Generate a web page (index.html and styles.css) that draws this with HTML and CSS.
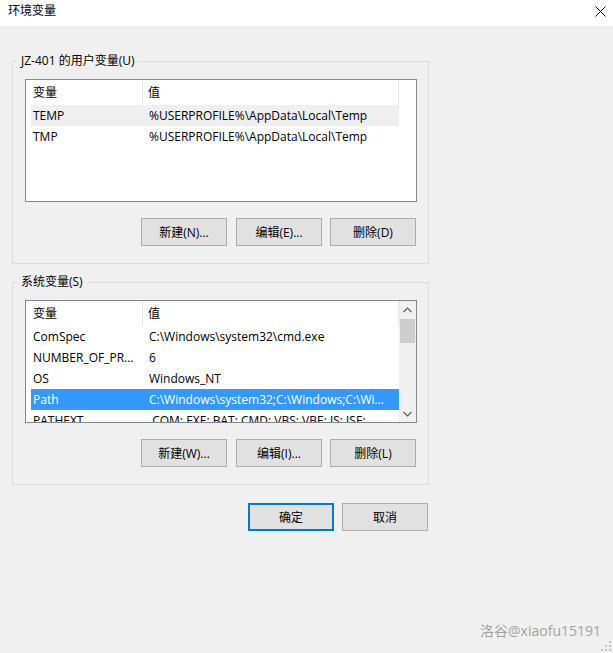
FILE: index.html
```html
<!DOCTYPE html>
<html lang="zh-CN">
<head>
<meta charset="utf-8">
<title>环境变量</title>
<link rel="stylesheet" href="styles.css">
</head>
<body>
<div class="window">
  <div class="titlebar">
    <span class="title">环境变量</span>
    <svg class="close" width="11" height="11" viewBox="0 0 11 11"><path d="M0.5 0.5 L10.5 10.5 M10.5 0.5 L0.5 10.5" stroke="#000" stroke-width="1" fill="none"/></svg>
  </div>
  <div class="content">
    <fieldset class="group">
      <legend>JZ-401 的用户变量(U)</legend>
      <div class="list">
        <div class="rows">
          <div class="row head"><span class="c1">变量</span><span class="c2">值</span></div>
          <div class="row inactive"><span class="c1">TEMP</span><span class="c2">%USERPROFILE%\AppData\Local\Temp</span></div>
          <div class="row"><span class="c1">TMP</span><span class="c2">%USERPROFILE%\AppData\Local\Temp</span></div>
        </div>
      </div>
      <div class="btns">
        <button class="btn">新建(N)...</button>
        <button class="btn">编辑(E)...</button>
        <button class="btn last">删除(D)</button>
      </div>
    </fieldset>

    <fieldset class="group group-sys">
      <legend>系统变量(S)</legend>
      <div class="list">
        <div class="rows">
          <div class="row head"><span class="c1">变量</span><span class="c2">值</span></div>
          <div class="row"><span class="c1">ComSpec</span><span class="c2">C:\Windows\system32\cmd.exe</span></div>
          <div class="row"><span class="c1">NUMBER_OF_PR...</span><span class="c2">6</span></div>
          <div class="row"><span class="c1">OS</span><span class="c2">Windows_NT</span></div>
          <div class="row selected"><span class="c1">Path</span><span class="c2">C:\Windows\system32;C:\Windows;C:\Wi...</span></div>
          <div class="row"><span class="c1">PATHEXT</span><span class="c2">.COM;.EXE;.BAT;.CMD;.VBS;.VBE;.JS;.JSE;</span></div>
        </div>
        <div class="scrollbar">
          <div class="arrow"><svg width="9" height="6" viewBox="0 0 9 6"><path d="M0.5 5 L4.5 1 L8.5 5" stroke="#606060" stroke-width="1.2" fill="none"/></svg></div>
          <div class="track"><div class="thumb"></div></div>
          <div class="arrow"><svg width="9" height="6" viewBox="0 0 9 6"><path d="M0.5 1 L4.5 5 L8.5 1" stroke="#606060" stroke-width="1.2" fill="none"/></svg></div>
        </div>
      </div>
      <div class="btns">
        <button class="btn">新建(W)...</button>
        <button class="btn">编辑(I)...</button>
        <button class="btn last">删除(L)</button>
      </div>
    </fieldset>

    <div class="btns dialog-btns">
      <button class="btn default">确定</button>
      <button class="btn">取消</button>
    </div>
  </div>
  <div class="watermark">洛谷@xiaofu15191</div>
  <svg class="grip" width="11" height="11" viewBox="0 0 11 11">
    <rect x="9" y="1" width="2" height="2" fill="#c4c4c4"/>
    <rect x="5" y="5" width="2" height="2" fill="#c4c4c4"/>
    <rect x="9" y="5" width="2" height="2" fill="#c4c4c4"/>
    <rect x="1" y="9" width="2" height="2" fill="#c4c4c4"/>
    <rect x="5" y="9" width="2" height="2" fill="#c4c4c4"/>
    <rect x="9" y="9" width="2" height="2" fill="#c4c4c4"/>
  </svg>
</div>
</body>
</html>
```

FILE: styles.css
```css
* { box-sizing: border-box; }

html, body {
  margin: 0;
  padding: 0;
  background: #f0f0f0;
}

body {
  font-family: "Open Sans", "Noto Sans CJK SC", sans-serif;
  font-size: 12px;
  color: #000;
}

.window {
  position: relative;
  width: 613px;
  height: 653px;
  background: #f0f0f0;
  overflow: hidden;
}

.titlebar {
  height: 26px;
  background: #fff;
  display: flex;
  justify-content: space-between;
  align-items: flex-start;
  padding: 0 7px 0 8px;
}

.title {
  line-height: 16px;
  padding-top: 3px;
}

.close {
  margin-top: 6px;
}

.content {
  padding: 27px 0 0 12px;
  width: 429px;
}

.group {
  margin: 0;
  padding: 10px 11px 17px 4px;
  border: 1px solid #dcdcdc;
  min-inline-size: 0;
}

.group-sys {
  margin-top: 10px;
}

.group legend {
  padding: 0 4px;
  line-height: 16px;
}

.list {
  margin-left: 8px;
  height: 123px;
  border: 1px solid #828790;
  background: #fff;
  display: flex;
  padding-left: 5px;
  overflow: hidden;
}

.rows {
  width: 368px;
  display: flex;
  flex-direction: column;
}

.row {
  display: flex;
  height: 21px;
  flex: none;
  line-height: 21px;
  white-space: nowrap;
}

.row .c1 {
  width: 112px;
  padding-left: 2px;
  overflow: hidden;
  flex: none;
}

.row .c2 {
  width: 256px;
  padding-left: 6px;
  overflow: hidden;
  flex: none;
}

.row.head {
  height: 25px;
  line-height: 25px;
}

.row.head .c1 {
  border-right: 1px solid #e5e5e5;
}

.row.head .c2 {
  padding-left: 5px;
  border-right: 1px solid #e5e5e5;
}

.row.inactive {
  background: #efefef;
}

.row.selected {
  background: #3399ff;
  color: #fff;
}

.scrollbar {
  width: 17px;
  flex: none;
  display: flex;
  flex-direction: column;
  background: #f0f0f0;
}

.arrow {
  height: 17px;
  display: flex;
  align-items: center;
  justify-content: center;
  flex: none;
}

.track {
  flex: 1;
}

.thumb {
  margin: 1px 1px 0 1px;
  height: 24px;
  background: #cdcdcd;
}

.btns {
  display: flex;
  justify-content: flex-end;
  gap: 9px;
  margin-top: 16px;
  margin-right: 1px;
}

.btns .btn.last {
  margin-left: -1px;
}

.btn {
  width: 86px;
  height: 28px;
  background: #e1e1e1;
  border: 1px solid #adadad;
  font-family: inherit;
  font-size: 12px;
  color: #000;
  padding: 0;
  margin: 0;
}

.btn.default {
  border: 2px solid #0078d7;
}

.dialog-btns {
  margin-top: 18px;
  gap: 8px;
}

.watermark {
  position: absolute;
  right: 12px;
  top: 623px;
  font-size: 14px;
  line-height: 16px;
  color: #a3a3a3;
}

.grip {
  position: absolute;
  right: 2px;
  bottom: 2px;
}
```
